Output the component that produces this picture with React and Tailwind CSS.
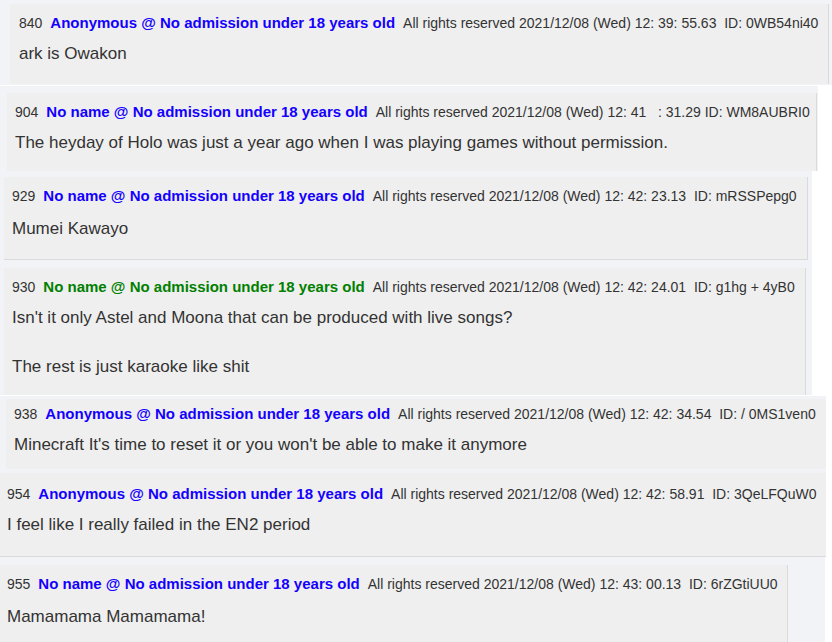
import React from "react";

const posts = [
  {
    no: "840",
    name: "Anonymous @ No admission under 18 years old",
    date: "All rights reserved 2021/12/08 (Wed) 12: 39: 55.63  ID: 0WB54ni40",
    body: ["ark is Owakon"],
    strip: "w-full h-[85px] pt-[4px] pl-[10px] mb-[1px]",
    box: "w-[819px] h-[80px] border-r pt-[9px] pl-[9px]",
    gap: "mt-[9px]",
  },
  {
    no: "904",
    name: "No name @ No admission under 18 years old",
    date: "All rights reserved 2021/12/08 (Wed) 12: 41   : 31.29 ID: WM8AUBRI0",
    body: [
      "The heyday of Holo was just a year ago when I was playing games without permission.",
    ],
    strip: "w-[818px] h-[85px] pt-[7px] pl-[7px]",
    box: "w-[810px] h-[78px] border-r pt-[9px] pl-[8px]",
    gap: "mt-[9px]",
  },
  {
    no: "929",
    name: "No name @ No admission under 18 years old",
    date: "All rights reserved 2021/12/08 (Wed) 12: 42: 23.13  ID: mRSSPepg0",
    body: ["Mumei Kawayo"],
    strip: "w-[812px] h-[89px] pt-[6px] pl-[4px]",
    box: "w-[804px] h-[83px] border-r border-b pt-[9px] pl-[8px]",
    gap: "mt-[11px]",
  },
  {
    no: "930",
    name: "No name @ No admission under 18 years old",
    green: true,
    date: "All rights reserved 2021/12/08 (Wed) 12: 42: 24.01  ID: g1hg + 4yB0",
    body: [
      "Isn't it only Astel and Moona that can be produced with live songs?",
      "",
      "The rest is just karaoke like shit",
    ],
    strip: "w-[812px] h-[135px] pt-[8px] pl-[4px] mb-[1px]",
    box: "w-[802px] h-[127px] border-r pt-[9px] pl-[8px]",
    gap: "mt-[9px]",
  },
  {
    no: "938",
    name: "Anonymous @ No admission under 18 years old",
    date: "All rights reserved 2021/12/08 (Wed) 12: 42: 34.54  ID: / 0MS1ven0",
    body: ["Minecraft It's time to reset it or you won't be able to make it anymore"],
    strip: "w-[826px] h-[74px] pt-[3px] pl-[6px]",
    box: "w-[820px] h-[70px] pt-[5px] pl-[8px]",
    gap: "mt-[9px]",
  },
  {
    no: "954",
    name: "Anonymous @ No admission under 18 years old",
    date: "All rights reserved 2021/12/08 (Wed) 12: 42: 58.91  ID: 3QeLFQuW0",
    body: ["I feel like I really failed in the EN2 period"],
    strip: "w-[826px] h-[87px] pt-[3px]",
    box: "w-[826px] h-[84px] border-b pt-[11px] pl-[7px]",
    gap: "mt-[9px]",
  },
  {
    no: "955",
    name: "No name @ No admission under 18 years old",
    date: "All rights reserved 2021/12/08 (Wed) 12: 43: 00.13  ID: 6rZGtiUU0",
    body: ["Mamamama Mamamama!"],
    strip: "w-[825px] pt-[8px]",
    box: "w-[788px] h-[90px] border-r pt-[9px] pl-[7px]",
    gap: "mt-[11px]",
  },
];

const Post = ({ post }) => (
  <div className={`bg-[#f2f3f7] ${post.strip}`}>
    <div className={`bg-[#efefef] border-[#dadada] ${post.box}`}>
      <div className="flex items-baseline gap-[8px] h-[20px] leading-[20px] whitespace-nowrap">
        <span className="text-[14px] text-[#333]">{post.no}</span>
        <span
          className={`text-[15px] font-bold ${
            post.green ? "text-[#008000]" : "text-[#1400ff]"
          }`}
        >
          {post.name}
        </span>
        <span className="text-[14px] text-[#333] whitespace-pre">{post.date}</span>
      </div>
      <div className={`${post.gap} text-[17px] leading-[24.5px] text-[#333]`}>
        {post.body.map((line, i) => (
          <div key={i} className="h-[24.5px] whitespace-nowrap">
            {line}
          </div>
        ))}
      </div>
    </div>
  </div>
);

export default function App() {
  return (
    <div className="w-[832px] h-[642px] overflow-hidden bg-white font-['Liberation_Sans',Arial,sans-serif]">
      {posts.map((post) => (
        <Post key={post.no} post={post} />
      ))}
    </div>
  );
}
